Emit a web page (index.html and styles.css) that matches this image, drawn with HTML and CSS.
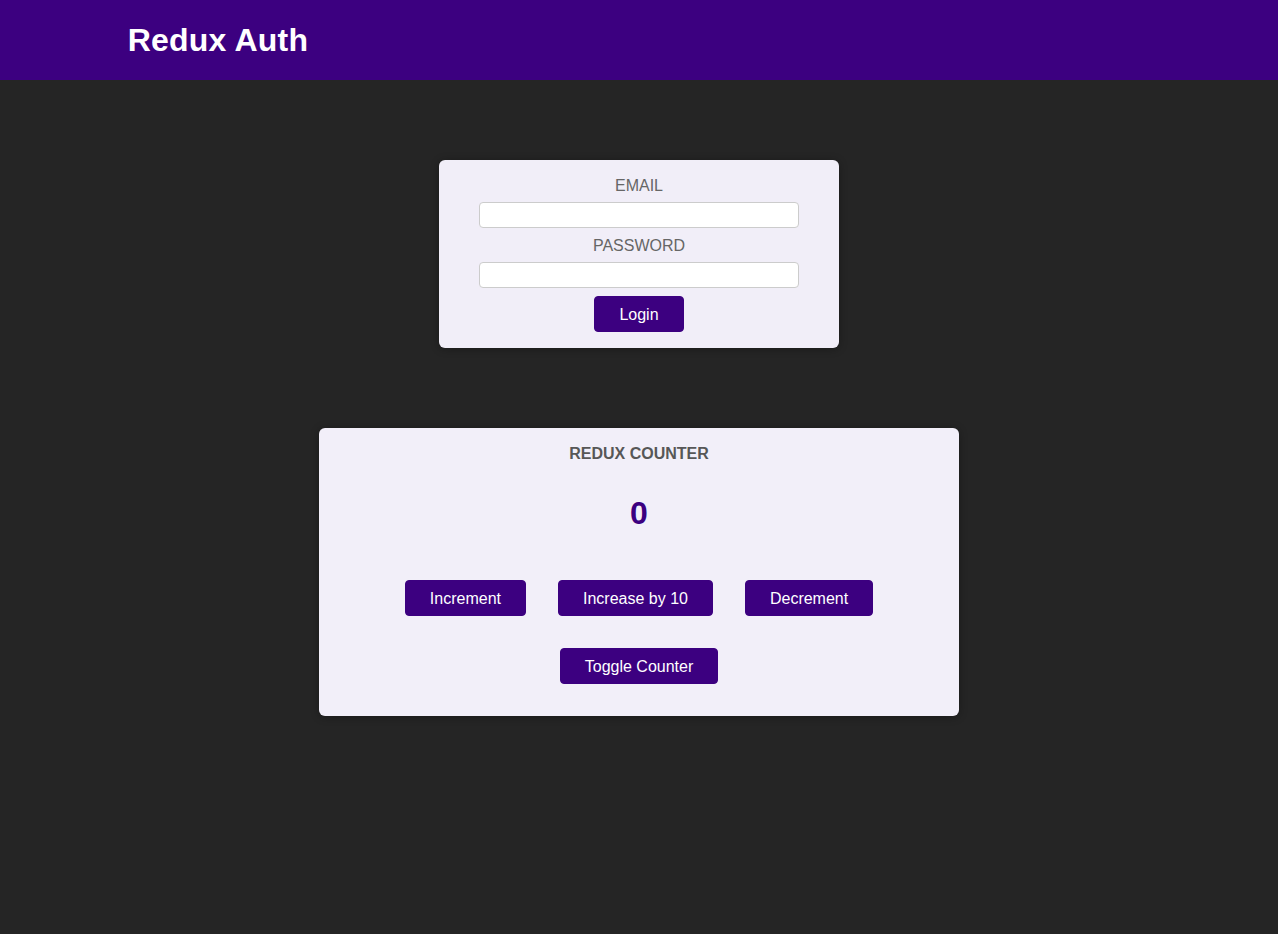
FILE: index.html
```html
<!DOCTYPE html>
<html lang="en">
<head>
<meta charset="utf-8">
<title>Redux Auth</title>
<link rel="stylesheet" href="styles.css">
</head>
<body>
<header class="header">
  <h1 class="header-title">Redux Auth</h1>
</header>
<main>
  <section class="auth">
    <form class="auth-form">
      <div class="control">
        <label for="email">Email</label>
        <input type="email" id="email">
      </div>
      <div class="control">
        <label for="password">Password</label>
        <input type="password" id="password">
      </div>
      <button type="button" class="btn">Login</button>
    </form>
  </section>
  <section class="counter">
    <h2 class="counter-title">Redux Counter</h2>
    <div class="counter-value">0</div>
    <div class="counter-actions">
      <button class="btn">Increment</button>
      <button class="btn">Increase by 10</button>
      <button class="btn">Decrement</button>
    </div>
    <div class="counter-toggle">
      <button class="btn">Toggle Counter</button>
    </div>
  </section>
</main>
</body>
</html>
```

FILE: styles.css
```css
* { box-sizing: border-box; }

html, body {
  margin: 0;
  padding: 0;
}

body {
  background: #252525;
  font-family: "Liberation Sans", Arial, sans-serif;
  min-height: 934px;
}

.header {
  height: 80px;
  background: #3c0080;
  padding: 0 10%;
  display: flex;
  align-items: center;
}

.header-title {
  margin: 0;
  color: #ffffff;
  font-size: 32px;
  font-weight: bold;
  letter-spacing: 0.2px;
}

.auth {
  width: 400px;
  margin: 80px auto;
  background: #f1eef8;
  border-radius: 6px;
  padding: 16px;
  box-shadow: 0 1px 8px rgba(0, 0, 0, 0.3);
  text-align: center;
}

.auth-form {
  margin: 0;
  display: flex;
  flex-direction: column;
  align-items: center;
}

.control {
  width: 320px;
  display: flex;
  flex-direction: column;
  align-items: center;
}

.control label {
  display: block;
  font-size: 16px;
  line-height: 18px;
  color: #666666;
  text-transform: uppercase;
  padding-top: 1px;
  margin-bottom: 7px;
}

.control input {
  display: block;
  width: 320px;
  height: 26px;
  border: 1px solid #cccccc;
  border-radius: 4px;
  background: #ffffff;
  margin: 0 0 8px;
  font: inherit;
}

.btn {
  font-family: "Liberation Sans", Arial, sans-serif;
  font-size: 16px;
  line-height: 18px;
  color: #ffffff;
  background: #3c0080;
  border: 1px solid #3c0080;
  border-radius: 4px;
  padding: 9px 24px 7px;
  cursor: pointer;
}

.auth .btn {
  width: 90px;
  padding: 9px 0 7px;
}

.counter {
  width: 640px;
  margin: 0 auto;
  background: #f2eff9;
  border-radius: 6px;
  padding: 16px;
  text-align: center;
  box-shadow: 0 1px 8px rgba(0, 0, 0, 0.3);
}

.counter-title {
  margin: 0;
  padding-top: 1px;
  height: 19px;
  font-size: 16px;
  line-height: 18px;
  font-weight: bold;
  color: #575757;
  text-transform: uppercase;
}

.counter-value {
  margin: 32px 0 48px;
  font-size: 32px;
  line-height: 37px;
  font-weight: bold;
  color: #3c0080;
}

.counter-actions {
  display: flex;
  justify-content: center;
  gap: 32px;
  margin: 0;
}

.counter-toggle {
  display: flex;
  justify-content: center;
  margin: 32px 0 16px;
}
```
